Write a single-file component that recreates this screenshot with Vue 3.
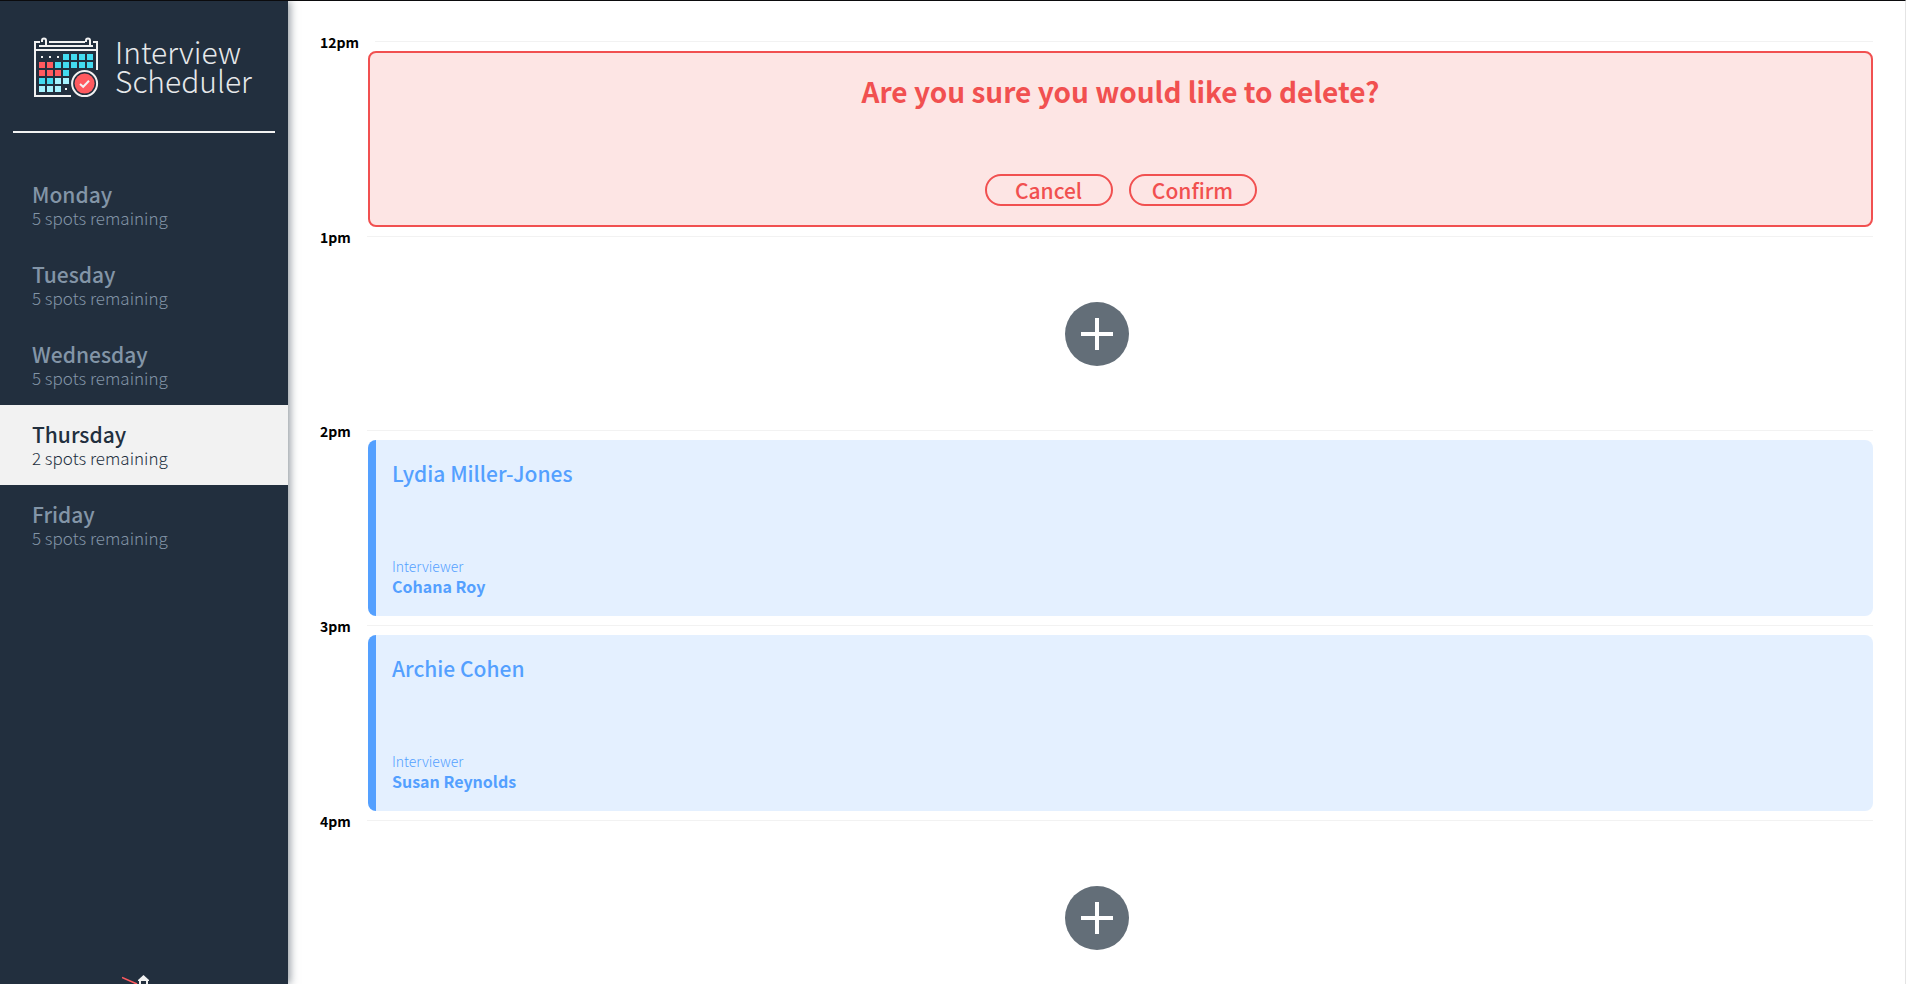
<script setup>
import { ref } from 'vue'

const days = [
  { name: 'Monday', spots: 5 },
  { name: 'Tuesday', spots: 5 },
  { name: 'Wednesday', spots: 5 },
  { name: 'Thursday', spots: 2 },
  { name: 'Friday', spots: 5 },
]
const selected = ref('Thursday')

const appointments = [
  { time: '12pm', mode: 'confirm' },
  { time: '1pm', mode: 'empty' },
  { time: '2pm', mode: 'show', student: 'Lydia Miller-Jones', interviewer: 'Cohana Roy' },
  { time: '3pm', mode: 'show', student: 'Archie Cohen', interviewer: 'Susan Reynolds' },
  { time: '4pm', mode: 'empty' },
]

const palette = { c: '#43dbf0', r: '#ff5a5f', p: '#a6f3ff', w: '#f2f2f2' }
const cells = ['wwwcccc', 'rrccccc', 'rrrc', 'ccpp', 'pppw'].flatMap((row, y) =>
  [...row].map((kind, x) => {
    const dot = kind === 'w'
    return {
      key: `${x}-${y}`,
      x: 5 + x * 8 + (dot ? 2 : 0),
      y: 18 + y * 8 + (dot ? 2 : 0),
      size: dot ? 2 : 6,
      fill: palette[kind],
    }
  })
)
</script>

<template>
  <div class="layout">
    <aside class="sidebar">
      <div class="brand">
        <svg class="brand-icon" width="66" height="62" viewBox="0 0 66 62" aria-hidden="true">
          <g fill="none" stroke="#f2f2f2" stroke-width="2">
            <path d="M37 60H1V6H6M15 6H51M59 6H63V34M5 10H59M1 14H63" />
            <path d="M12 10V4.5A2 2 0 0 0 8 4.5V6M56 10V4.5A2 2 0 0 0 52 4.5V6" />
          </g>
          <rect v-for="c in cells" :key="c.key" :x="c.x" :y="c.y" :width="c.size" :height="c.size" :fill="c.fill" />
          <circle cx="50.6" cy="47.6" r="12.5" fill="#222f3e" stroke="#f2f2f2" stroke-width="2" />
          <circle cx="50.6" cy="47.6" r="10" fill="#ff5a5f" />
          <path d="M46 48L49.2 50.8L55 44.8" fill="none" stroke="#f2f2f2" stroke-width="2" />
        </svg>
        <h1 class="brand-name">Interview<br />Scheduler</h1>
      </div>
      <hr class="divider" />
      <nav class="days">
        <button
          v-for="d in days"
          :key="d.name"
          type="button"
          class="day"
          :class="{ selected: d.name === selected }"
          @click="selected = d.name"
        >
          <span class="day-name">{{ d.name }}</span>
          <span class="day-spots">{{ d.spots }} spots remaining</span>
        </button>
      </nav>
      <svg class="lighthouse" width="44" height="9" viewBox="0 0 44 9" aria-hidden="true">
        <path d="M0 2.5L15 9" stroke="#ff5a5f" stroke-width="1.6" />
        <path d="M16 5L21.5 0L27 5V6H16Z" fill="#f2f2f2" />
        <path d="M18 5V9M25 5V9" stroke="#f2f2f2" stroke-width="2" />
      </svg>
    </aside>

    <main class="schedule">
      <section v-for="a in appointments" :key="a.time" class="appointment">
        <header class="slot">
          <h2 class="slot-time">{{ a.time }}</h2>
          <hr class="slot-line" />
        </header>

        <div v-if="a.mode === 'confirm'" class="card confirm">
          <h3 class="confirm-title">Are you sure you would like to delete?</h3>
          <div class="actions">
            <button type="button" class="pill">Cancel</button>
            <button type="button" class="pill">Confirm</button>
          </div>
        </div>

        <div v-else-if="a.mode === 'show'" class="card show">
          <h3 class="student">{{ a.student }}</h3>
          <div>
            <h4 class="label">Interviewer</h4>
            <p class="interviewer">{{ a.interviewer }}</p>
          </div>
        </div>

        <div v-else class="empty">
          <button type="button" class="add" aria-label="Add appointment">
            <svg width="32" height="32" viewBox="0 0 32 32" aria-hidden="true">
              <path d="M16 0V32M0 16H32" stroke="#fff" stroke-width="4" />
            </svg>
          </button>
        </div>
      </section>
    </main>
  </div>
</template>

<style>
body {
  overflow: hidden;
}
</style>

<style scoped>
.layout {
  display: flex;
  box-sizing: border-box;
  height: 100vh;
  overflow: hidden;
  border-top: 1px solid #0b0b0d;
  border-right: 1px solid #e4e4e4;
  background: #fff;
  font-family: "Noto Sans CJK SC", "Noto Sans", sans-serif;
}

h1, h2, h3, h4, p {
  margin: 0;
}

button {
  font-family: inherit;
  cursor: pointer;
}

.sidebar {
  display: flex;
  flex: none;
  flex-direction: column;
  box-sizing: border-box;
  width: 288px;
  background: #222f3e;
  box-shadow: 2px 0 8px rgba(34, 47, 62, 0.5);
  z-index: 1;
}

.brand {
  display: flex;
  gap: 15px;
  padding: 35px 0 33px 34px;
}

.brand-icon {
  flex: none;
}

.brand-name {
  padding-top: 1px;
  color: #e6e8ea;
  font-size: 30px;
  font-weight: 300;
  line-height: 29px;
}

.divider {
  flex: none;
  width: 262px;
  height: 2px;
  margin: 0 auto 32px;
  border: 0;
  background: #f2f2f2;
}

.days {
  display: flex;
  flex-direction: column;
}

.day {
  display: flex;
  flex-direction: column;
  padding: 16px 32px;
  border: 0;
  background: transparent;
  color: #8395a7;
  text-align: left;
}

.day.selected {
  background: #f2f2f2;
  color: #222f3e;
}

.day-name {
  font-size: 21px;
  font-weight: 500;
  line-height: 26px;
}

.day-spots {
  font-size: 17px;
  font-weight: 300;
  line-height: 22px;
}

.lighthouse {
  flex: none;
  align-self: center;
  margin-top: auto;
}

.schedule {
  flex: 1;
  min-width: 0;
  padding: 31px 32px 0;
}

.slot {
  display: flex;
  align-items: center;
  gap: 16px;
  height: 19px;
}

.slot-time {
  padding-top: 1px;
  font-size: 14px;
  font-weight: 700;
  line-height: 19px;
}

.slot-line {
  flex: 1;
  height: 1px;
  margin: 0;
  border: 0;
  background: #f2f2f2;
}

.card {
  display: flex;
  flex-direction: column;
  justify-content: space-between;
  box-sizing: border-box;
  height: 176px;
  margin-left: 48px;
  border-radius: 8px;
}

.confirm {
  align-items: center;
  padding: 21px 16px 19px;
  border: 2px solid #f15050;
  background: #fde5e4;
  color: #f15050;
}

.confirm-title {
  font-size: 28px;
  font-weight: 700;
  line-height: 34px;
}

.actions {
  display: flex;
  gap: 16px;
}

.pill {
  box-sizing: border-box;
  width: 128px;
  height: 32px;
  padding: 0;
  border: 2px solid #f15050;
  border-radius: 16px;
  background: transparent;
  color: #f15050;
  font-size: 21px;
  font-weight: 500;
  line-height: 28px;
}

.show {
  padding: 20px 16px;
  border-left: 8px solid #54a0ff;
  background: #e4f0ff;
  color: #54a0ff;
}

.student {
  font-size: 21px;
  font-weight: 500;
  line-height: 26px;
}

.label {
  font-size: 14px;
  font-weight: 300;
  line-height: 20px;
}

.interviewer {
  font-size: 16px;
  font-weight: 700;
  line-height: 20px;
}

.empty {
  display: flex;
  align-items: center;
  justify-content: center;
  height: 175px;
}

.add {
  display: grid;
  place-items: center;
  width: 64px;
  height: 64px;
  padding: 0;
  border: 0;
  border-radius: 50%;
  background: #636e78;
}
</style>
